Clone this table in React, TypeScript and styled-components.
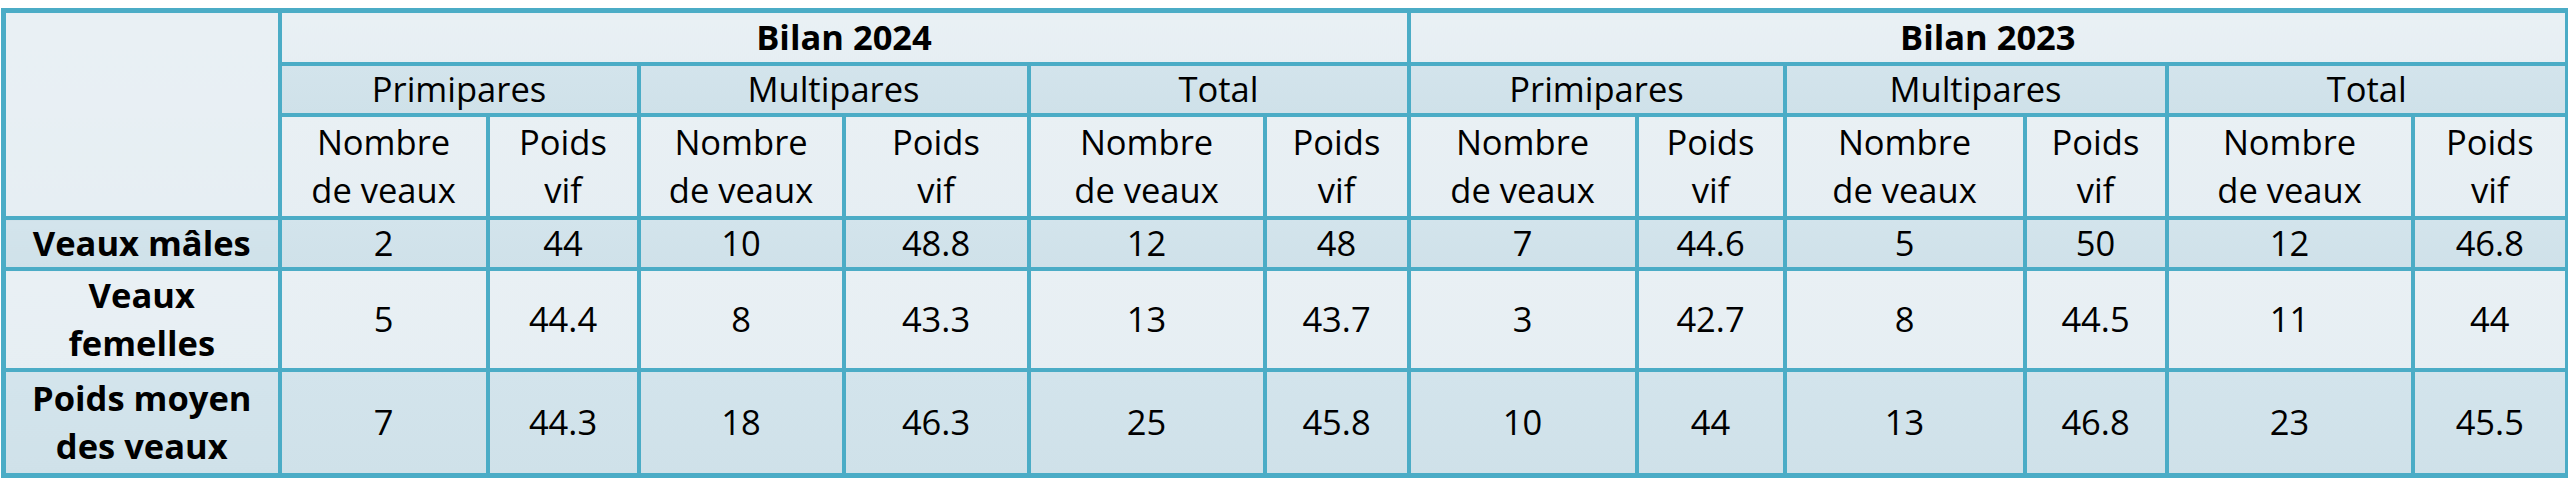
import React from "react";
import styled, { createGlobalStyle } from "styled-components";

const GlobalStyle = createGlobalStyle`
  body {
    margin: 0;
    background: #ffffff;
  }
`;

const BORDER = "#4bacc6";

const Table = styled.table`
  border-collapse: collapse;
  table-layout: fixed;
  width: 2564px;
  margin: 8px 0 0 1px;
  font-family: "Open Sans", "Noto Sans", sans-serif;
  font-size: 34.5px;
  line-height: 44px;
  color: #000;
  border: 5px solid ${BORDER};
`;

const Row = styled.tr<{ $h: number }>`
  height: ${(p) => p.$h}px;
`;

const Cell = styled.td<{ $tone: "light" | "dark"; $bold?: boolean }>`
  border: 4px solid ${BORDER};
  padding: 0;
  text-align: center;
  vertical-align: middle;
  font-weight: ${(p) => (p.$bold ? 700 : 400)};
  background: ${(p) =>
    p.$tone === "dark"
      ? "linear-gradient(180deg, #d3e4ec 0%, #cfe1e9 100%)"
      : "linear-gradient(180deg, #e9f0f4 0%, #e6eef3 100%)"};
`;

// two stacked lines inside one cell
const Lines = styled.span`
  display: block;
  line-height: 48px;
`;

const colWidths = [276, 208, 151, 205, 185, 236, 144, 228, 148, 240, 142, 246, 155];

const groups = ["Primipares", "Multipares", "Total"];

type DataRow = {
  label: React.ReactNode;
  values: string[];
  tone: "light" | "dark";
  h: number;
};

const rows: DataRow[] = [
  {
    label: "Veaux mâles",
    values: ["2", "44", "10", "48.8", "12", "48", "7", "44.6", "5", "50", "12", "46.8"],
    tone: "dark",
    h: 51,
  },
  {
    label: (
      <Lines>
        Veaux
        <br />
        femelles
      </Lines>
    ),
    values: ["5", "44.4", "8", "43.3", "13", "43.7", "3", "42.7", "8", "44.5", "11", "44"],
    tone: "light",
    h: 101,
  },
  {
    label: (
      <Lines>
        Poids moyen
        <br />
        des veaux
      </Lines>
    ),
    values: ["7", "44.3", "18", "46.3", "25", "45.8", "10", "44", "13", "46.8", "23", "45.5"],
    tone: "dark",
    h: 106,
  },
];

const years = ["Bilan 2024", "Bilan 2023"];

export default function App() {
  return (
    <>
      <GlobalStyle />
      <Table>
        <colgroup>
          {colWidths.map((w, i) => (
            <col key={i} style={{ width: w }} />
          ))}
        </colgroup>
        <tbody>
          <Row $h={53}>
            <Cell $tone="light" rowSpan={3} />
            {years.map((y) => (
              <Cell key={y} $tone="light" $bold colSpan={6}>
                {y}
              </Cell>
            ))}
          </Row>
          <Row $h={51}>
            {years.map((y) =>
              groups.map((g) => (
                <Cell key={y + g} $tone="dark" colSpan={2}>
                  {g}
                </Cell>
              ))
            )}
          </Row>
          <Row $h={103}>
            {years.map((y) =>
              groups.map((g) => (
                <React.Fragment key={y + g}>
                  <Cell $tone="light">
                    <Lines>
                      Nombre
                      <br />
                      de veaux
                    </Lines>
                  </Cell>
                  <Cell $tone="light">
                    <Lines>
                      Poids
                      <br />
                      vif
                    </Lines>
                  </Cell>
                </React.Fragment>
              ))
            )}
          </Row>
          {rows.map((r, i) => (
            <Row key={i} $h={r.h}>
              <Cell $tone={r.tone} $bold>
                {r.label}
              </Cell>
              {r.values.map((v, j) => (
                <Cell key={j} $tone={r.tone}>
                  {v}
                </Cell>
              ))}
            </Row>
          ))}
        </tbody>
      </Table>
    </>
  );
}
